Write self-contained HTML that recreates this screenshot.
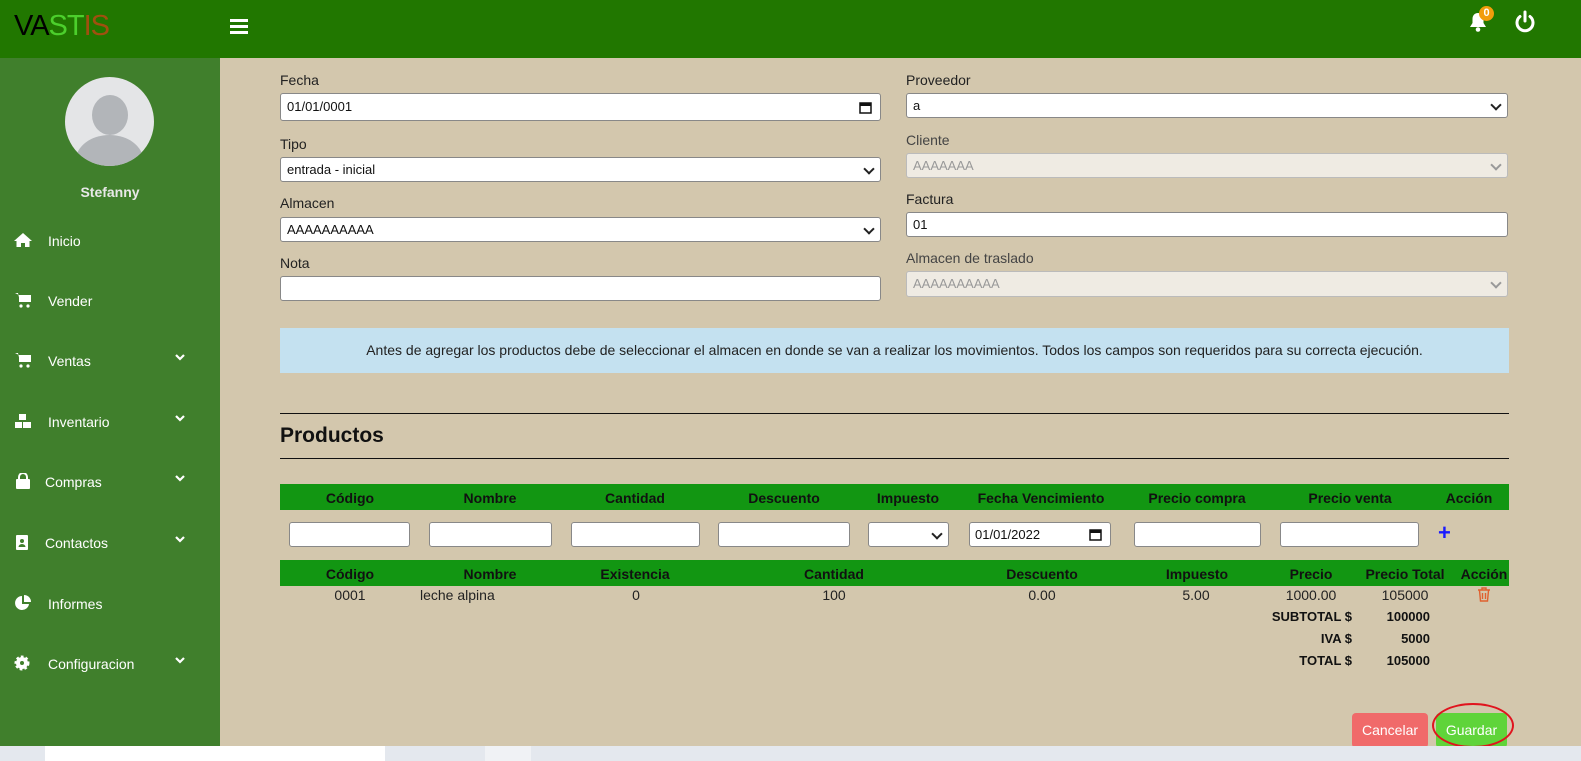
<!DOCTYPE html>
<html><head><meta charset="utf-8"><style>
*{box-sizing:border-box;margin:0;padding:0}
body{width:1581px;height:761px;overflow:hidden;position:relative;font-family:"Liberation Sans",Arial,sans-serif;background:#d3c7ad;font-size:14px;color:#111}
.a{position:absolute}
.top{left:0;top:0;width:1581px;height:58px;background:#217700}
.side{left:0;top:58px;width:220px;height:688px;background:#407f2c;color:#fff}
.nav{position:absolute;left:0;width:220px;font-size:14px;color:#fff}
.nav .ic{position:absolute;left:14px;top:-1px;width:18px;height:16px}
.nav .t{position:absolute;left:48px;top:0}
.nav .ch{position:absolute;left:174px;top:-2px;width:12px;height:12px}
.lbl{position:absolute;font-size:14px;color:#222}
.in{position:absolute;background:#fff;border:1px solid #888;border-radius:3px;font-size:13px;padding-left:6px;line-height:23px;color:#111}
.dis{background:#efebe3;color:#999;border-color:#bbb}
.sel:after{content:"";position:absolute;right:7px;top:7px;width:6px;height:6px;border-right:2px solid #222;border-bottom:2px solid #222;transform:rotate(45deg)}
.dis.sel:after{border-color:#999}
.hd{position:absolute;height:26px;background:#129612;left:280px;width:1229px}
.hd span,.c{position:absolute;transform:translateX(-50%);white-space:nowrap}
.hd span{top:6px;font-weight:bold;font-size:14px;color:#111}
.c{font-size:14px;color:#222}
.r{position:absolute;font-weight:bold;font-size:13px;text-align:right;white-space:nowrap}
.fi{position:absolute;top:522px;height:25px;background:#fff;border:1px solid #888;border-radius:3px}
</style></head><body>
<div class="a top"></div>
<div class="a" style="left:14px;top:11px;font-size:29px;letter-spacing:-1px;line-height:30px"><span style="color:#000">VA</span><span style="color:#4ccf2c">ST</span><span style="color:#a0500f">IS</span></div>
<div class="a" style="left:230px;top:19px;width:18px;height:3px;background:#fff;box-shadow:0 6px 0 #fff,0 12px 0 #fff"></div>
<svg class="a" style="left:1466px;top:10px" width="24" height="24" viewBox="0 0 24 24"><path d="M12 3c-3.5 0-5.5 2.5-5.5 6v4l-2.5 4h16l-2.5-4V9c0-3.5-2-6-5.5-6z" fill="#fff"/><circle cx="12" cy="19.5" r="2.3" fill="#fff"/></svg>
<div class="a" style="left:1479px;top:6px;width:15px;height:15px;border-radius:50%;background:#f29d0b;color:#fff;font-size:11px;font-weight:bold;text-align:center;line-height:15px">0</div>
<svg class="a" style="left:1514px;top:10px" width="22" height="24" viewBox="0 0 22 24"><path d="M6 6.5a8 8 0 1 0 10 0" stroke="#fff" stroke-width="3" fill="none" stroke-linecap="round"/><line x1="11" y1="2" x2="11" y2="11" stroke="#fff" stroke-width="3" stroke-linecap="round"/></svg>

<div class="a side"></div>
<div class="a" style="left:65px;top:77px;width:89px;height:89px;border-radius:50%;background:#e4e5e7;overflow:hidden">
<div class="a" style="left:27px;top:18px;width:36px;height:40px;border-radius:50%;background:#b2b5b9"></div>
<div class="a" style="left:11px;top:58px;width:67px;height:50px;border-radius:50% 50% 0 0;background:#b2b5b9"></div></div>
<div class="a" style="left:0;top:184px;width:220px;text-align:center;color:#e8e8e8;font-weight:bold;font-size:14px">Stefanny</div>
<div class="nav" style="top:233px"><svg class="ic" viewBox="0 0 18 16"><path d="M9 1L0 9h2.5v6h4.5v-4h4v4h4.5V9H18z" fill="#fff"/></svg><span class="t">Inicio</span></div>
<div class="nav" style="top:293px"><svg class="ic" viewBox="0 0 18 16"><path d="M1 1h3l2 9h9l2-7H5" fill="#fff"/><rect x="5" y="3" width="12" height="7" fill="#fff"/><circle cx="7" cy="14" r="1.6" fill="#fff"/><circle cx="14" cy="14" r="1.6" fill="#fff"/></svg><span class="t">Vender</span></div>
<div class="nav" style="top:353px"><svg class="ic" viewBox="0 0 18 16"><path d="M1 1h3l2 9h9l2-7H5" fill="#fff"/><rect x="5" y="3" width="12" height="7" fill="#fff"/><circle cx="7" cy="14" r="1.6" fill="#fff"/><circle cx="14" cy="14" r="1.6" fill="#fff"/></svg><span class="t">Ventas</span><svg class="ch" viewBox="0 0 12 12"><path d="M2 4l4 4 4-4" stroke="#fff" stroke-width="2.2" fill="none"/></svg></div>
<div class="nav" style="top:414px"><svg class="ic" viewBox="0 0 18 16"><rect x="5" y="1" width="7" height="6" fill="#fff"/><rect x="1" y="9" width="7" height="6" fill="#fff"/><rect x="9" y="9" width="8" height="6" fill="#fff"/></svg><span class="t">Inventario</span><svg class="ch" viewBox="0 0 12 12"><path d="M2 4l4 4 4-4" stroke="#fff" stroke-width="2.2" fill="none"/></svg></div>
<div class="nav" style="top:474px"><svg class="ic" viewBox="0 0 18 16"><path d="M5 6V4a4 4 0 0 1 8 0v2" stroke="#fff" stroke-width="2" fill="none"/><rect x="2" y="6" width="14" height="10" rx="1" fill="#fff"/></svg><span class="t" style="left:45px">Compras</span><svg class="ch" viewBox="0 0 12 12"><path d="M2 4l4 4 4-4" stroke="#fff" stroke-width="2.2" fill="none"/></svg></div>
<div class="nav" style="top:535px"><svg class="ic" viewBox="0 0 18 16"><rect x="2" y="1" width="12" height="15" rx="1" fill="#fff"/><circle cx="8" cy="7" r="2" fill="#407f2c"/><path d="M4.5 13a3.5 3 0 0 1 7 0z" fill="#407f2c"/></svg><span class="t" style="left:45px">Contactos</span><svg class="ch" viewBox="0 0 12 12"><path d="M2 4l4 4 4-4" stroke="#fff" stroke-width="2.2" fill="none"/></svg></div>
<div class="nav" style="top:596px"><svg class="ic" viewBox="0 0 18 16"><path d="M8 1a7 7 0 1 0 7 8H8z" fill="#fff"/><path d="M10 0v7h7a7 7 0 0 0-7-7z" fill="#fff"/></svg><span class="t">Informes</span></div>
<div class="nav" style="top:656px"><svg class="ic" viewBox="0 0 18 16"><circle cx="8" cy="8" r="6" fill="#fff" stroke="#fff" stroke-width="3" stroke-dasharray="2.5 2"/><circle cx="8" cy="8" r="2" fill="#407f2c"/></svg><span class="t">Configuracion</span><svg class="ch" viewBox="0 0 12 12"><path d="M2 4l4 4 4-4" stroke="#fff" stroke-width="2.2" fill="none"/></svg></div>

<div class="lbl" style="left:280px;top:72px">Fecha</div>
<div class="in" style="left:280px;top:93px;width:601px;height:28px;line-height:26px">01/01/0001<svg class="a" style="right:8px;top:7px" width="13" height="13" viewBox="0 0 13 13"><rect x="1" y="2" width="11" height="10" fill="none" stroke="#111" stroke-width="1.5"/><rect x="1" y="2" width="11" height="3" fill="#111"/></svg></div>
<div class="lbl" style="left:280px;top:136px">Tipo</div>
<div class="in sel" style="left:280px;top:157px;width:601px;height:25px">entrada - inicial</div>
<div class="lbl" style="left:280px;top:195px">Almacen</div>
<div class="in sel" style="left:280px;top:217px;width:601px;height:25px">AAAAAAAAAA</div>
<div class="lbl" style="left:280px;top:255px">Nota</div>
<div class="in" style="left:280px;top:276px;width:601px;height:25px"></div>

<div class="lbl" style="left:906px;top:72px">Proveedor</div>
<div class="in sel" style="left:906px;top:93px;width:602px;height:25px">a</div>
<div class="lbl" style="left:906px;top:132px;color:#444">Cliente</div>
<div class="in sel dis" style="left:906px;top:153px;width:602px;height:25px">AAAAAAA</div>
<div class="lbl" style="left:906px;top:191px">Factura</div>
<div class="in" style="left:906px;top:212px;width:602px;height:25px">01</div>
<div class="lbl" style="left:906px;top:250px;color:#444">Almacen de traslado</div>
<div class="in sel dis" style="left:906px;top:271px;width:602px;height:26px">AAAAAAAAAA</div>

<div class="a" style="left:280px;top:328px;width:1229px;height:45px;background:#c4e1f0;text-align:center;line-height:45px;font-size:14px;color:#222">Antes de agregar los productos debe de seleccionar el almacen en donde se van a realizar los movimientos. Todos los campos son requeridos para su correcta ejecución.</div>

<div class="a" style="left:280px;top:413px;width:1229px;height:1px;background:#111"></div>
<div class="a" style="left:280px;top:424px;font-size:21px;font-weight:bold;color:#111">Productos</div>
<div class="a" style="left:280px;top:458px;width:1229px;height:1px;background:#111"></div>

<div class="hd" style="top:484px">
<span style="left:70px">Código</span><span style="left:210px">Nombre</span><span style="left:355px">Cantidad</span><span style="left:504px">Descuento</span><span style="left:628px">Impuesto</span><span style="left:761px">Fecha Vencimiento</span><span style="left:917px">Precio compra</span><span style="left:1070px">Precio venta</span><span style="left:1189px">Acción</span></div>
<div class="fi" style="left:289px;width:121px"></div>
<div class="fi" style="left:429px;width:123px"></div>
<div class="fi" style="left:571px;width:129px"></div>
<div class="fi" style="left:718px;width:132px"></div>
<div class="fi in sel" style="left:868px;width:81px"></div>
<div class="fi" style="left:969px;width:142px;font-size:13px;padding-left:5px;line-height:23px">01/01/2022<svg class="a" style="right:8px;top:5px" width="13" height="13" viewBox="0 0 13 13"><rect x="1" y="2" width="11" height="10" fill="none" stroke="#111" stroke-width="1.5"/><rect x="1" y="2" width="11" height="3" fill="#111"/></svg></div>
<div class="fi" style="left:1134px;width:127px"></div>
<div class="fi" style="left:1280px;width:139px"></div>
<div class="a" style="left:1438px;top:520px;color:#1a1aff;font-size:22px;font-weight:bold;line-height:26px">+</div>

<div class="hd" style="top:560px">
<span style="left:70px">Código</span><span style="left:210px">Nombre</span><span style="left:355px">Existencia</span><span style="left:554px">Cantidad</span><span style="left:762px">Descuento</span><span style="left:917px">Impuesto</span><span style="left:1031px">Precio</span><span style="left:1125px">Precio Total</span><span style="left:1204px">Acción</span></div>
<span class="c" style="left:350px;top:587px">0001</span>
<span class="a" style="left:420px;top:587px;font-size:14px;color:#222">leche alpina</span>
<span class="c" style="left:636px;top:587px">0</span>
<span class="c" style="left:834px;top:587px">100</span>
<span class="c" style="left:1042px;top:587px">0.00</span>
<span class="c" style="left:1196px;top:587px">5.00</span>
<span class="c" style="left:1311px;top:587px">1000.00</span>
<span class="c" style="left:1405px;top:587px">105000</span>
<svg class="a" style="left:1477px;top:587px" width="14" height="15" viewBox="0 0 14 15"><path d="M1 3h12M5 3V1h4v2M2.5 3.5l1 10.5h7l1-10.5M5.5 6v6M8.5 6v6" stroke="#e0602f" stroke-width="1.4" fill="none"/></svg>
<div class="r" style="right:229px;top:609px">SUBTOTAL $</div><div class="r" style="right:151px;top:609px">100000</div>
<div class="r" style="right:229px;top:631px">IVA $</div><div class="r" style="right:151px;top:631px">5000</div>
<div class="r" style="right:229px;top:653px">TOTAL $</div><div class="r" style="right:151px;top:653px">105000</div>

<div class="a" style="left:1352px;top:713px;width:76px;height:35px;background:#f06a6a;border-radius:4px;color:#fff;text-align:center;line-height:35px;font-size:14px">Cancelar</div>
<div class="a" style="left:1436px;top:713px;width:71px;height:35px;background:#5fd43a;border-radius:4px;color:#fff;text-align:center;line-height:35px;font-size:14px">Guardar</div>
<div class="a" style="left:1432px;top:703px;width:82px;height:45px;border:2px solid #e0141e;border-radius:50%"></div>

<div class="a" style="left:0;top:746px;width:1581px;height:15px;background:#e4e8ee"></div>
<div class="a" style="left:45px;top:746px;width:340px;height:15px;background:#fff"></div>
<div class="a" style="left:485px;top:746px;width:46px;height:15px;background:#f0f2f5"></div>
</body></html>
